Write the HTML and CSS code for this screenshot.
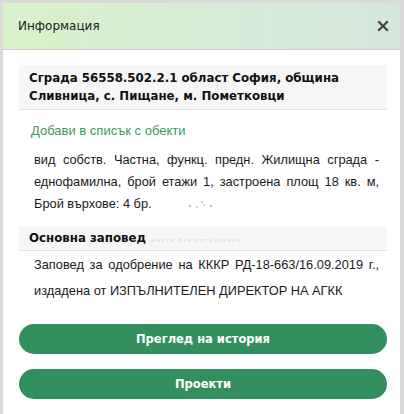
FILE: index.html
```html
<!DOCTYPE html>
<html lang="bg">
<head>
<meta charset="utf-8">
<title>Информация</title>
<link rel="stylesheet" href="styles.css">
</head>
<body>
<div class="modal">
  <div class="modal-header">
    <span class="modal-title">Информация</span>
    <span class="close" aria-label="Затвори">
      <svg width="12" height="12" viewBox="0 0 12 12"><path d="M2 2L10 10M10 2L2 10" stroke="#444" stroke-width="2.2" stroke-linecap="square"/></svg>
    </span>
  </div>
  <div class="modal-body">
    <div class="section-title">Сграда 56558.502.2.1 област София, община Сливница, с. Пищане, м. Пометковци</div>
    <a class="add-link" href="#">Добави в списък с обекти</a>
    <p class="desc">вид собств. Частна, функц. предн. Жилищна сграда - еднофамилна, брой етажи 1, застроена площ 18 кв. м, Брой върхове: 4 бр.<svg class="dots" width="26" height="10" viewBox="0 0 26 10"><circle cx="2" cy="7" r="1.2" fill="#8fd0e2"/><circle cx="9" cy="8" r="1.1" fill="#9fd6e6"/><circle cx="14" cy="3" r="1.1" fill="#8fd0e2"/><circle cx="16" cy="6" r="1" fill="#b0dde9"/><circle cx="23" cy="7" r="1.2" fill="#8fd0e2"/></svg></p>
    <div class="section-title single"><span>Основна заповед</span><span class="faint">имоти без погасяване</span></div>
    <p class="order">Заповед за одобрение на КККР РД-18-663/16.09.2019 г., издадена от ИЗПЪЛНИТЕЛЕН ДИРЕКТОР НА АГКК</p>
    <div class="actions">
      <button class="btn">Преглед на история</button>
      <button class="btn">Проекти</button>
    </div>
  </div>
</div>
</body>
</html>
```
FILE: styles.css
```css
html, body {
  margin: 0;
  padding: 0;
}
body {
  background: #d9d9d7;
  font-family: "DejaVu Sans", Verdana, sans-serif;
  color: #222;
  padding: 3px 4px 0 3px;
  height: 414px;
  box-sizing: border-box;
  overflow: hidden;
}
.modal {
  background: #fff;
  height: 411px;
}
.modal-header {
  height: 47px;
  box-sizing: border-box;
  padding: 0 10px 0 15px;
  display: flex;
  align-items: center;
  justify-content: space-between;
  background: linear-gradient(90deg, #d8f2c8 0%, #d6ecd6 55%, #d4e6dc 100%);
  border-bottom: 1px solid #c9d3cc;
}
.modal-title {
  font-size: 12px;
  color: #222;
}
.close {
  display: flex;
  width: 14px;
  height: 14px;
  align-items: center;
  justify-content: center;
}
.modal-body {
  padding: 15px 13px 0 16px;
}
.section-title {
  background: #f6f6f6;
  border-bottom: 1px solid #e3e3e3;
  padding: 4px 10px;
  font-weight: bold;
  font-size: 11.8px;
  line-height: 18px;
  color: #111;
}
.section-title.single {
  padding: 3px 10px;
  display: flex;
  align-items: center;
  gap: 5px;
}
.faint {
  font-weight: normal;
  font-size: 5px;
  line-height: 8px;
  letter-spacing: 1.6px;
  color: #b9d9e6;
  margin-top: 3px;
}
.add-link {
  display: block;
  margin-top: 11px;
  font-family: "Liberation Sans", Arial, sans-serif;
  font-size: 13px;
  line-height: 20px;
  color: #3a9a63;
  text-decoration: none;
  padding-left: 12px;
}
.desc, .order {
  font-family: "Liberation Sans", Arial, sans-serif;
  font-size: 12.8px;
  text-align: justify;
  color: #1a1a1a;
}
.desc {
  margin: 8px 8px 11px 15px;
  line-height: 22px;
}
.dots {
  margin-left: 36px;
  vertical-align: -1px;
}
.order {
  margin: 1px 8px 0 15px;
  line-height: 26px;
}
.actions {
  margin-top: 20px;
  display: flex;
  flex-direction: column;
  gap: 15px;
}
.btn {
  height: 30px;
  border: none;
  border-radius: 15px;
  background: #338f5e;
  color: #fff;
  font-family: "DejaVu Sans", Verdana, sans-serif;
  font-weight: bold;
  font-size: 11.5px;
  cursor: pointer;
}
```
